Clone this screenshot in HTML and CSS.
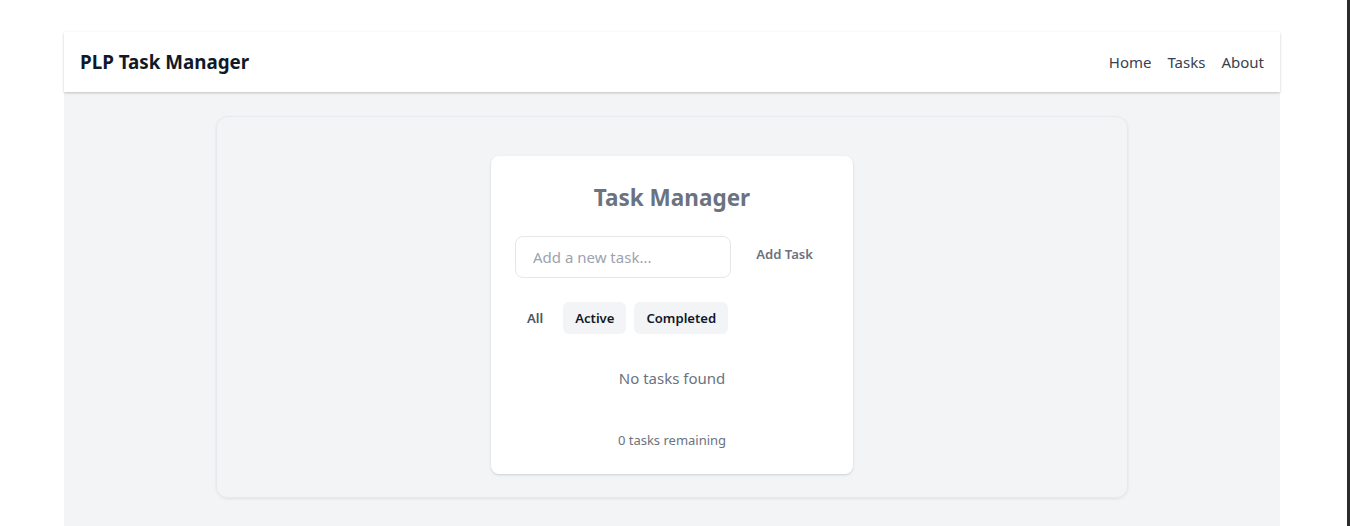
FILE: index.html
```html
<!DOCTYPE html>
<html lang="en">
<head>
<meta charset="utf-8">
<title>PLP Task Manager</title>
<link rel="stylesheet" href="styles.css">
</head>
<body>
<div class="app">
  <header class="navbar">
    <h1 class="brand">PLP Task Manager</h1>
    <nav class="nav">
      <a href="#">Home</a>
      <a href="#">Tasks</a>
      <a href="#">About</a>
    </nav>
  </header>
  <main class="main">
    <section class="panel">
      <div class="card">
        <h2 class="title">Task Manager</h2>
        <form class="add-row">
          <input class="task-input" type="text" placeholder="Add a new task...">
          <button class="add-btn" type="button">Add Task</button>
        </form>
        <div class="filters">
          <button class="filter filter-plain" type="button">All</button>
          <button class="filter filter-pill" type="button">Active</button>
          <button class="filter filter-pill" type="button">Completed</button>
        </div>
        <p class="empty">No tasks found</p>
        <p class="remaining">0 tasks remaining</p>
      </div>
    </section>
  </main>
</div>
<div class="edge"></div>
</body>
</html>
```

FILE: styles.css
```css
* { box-sizing: border-box; }
html, body { margin: 0; padding: 0; }
body {
  background: #ffffff;
  font-family: "Noto Sans", "Open Sans", sans-serif;
  height: 526px;
  overflow: hidden;
}
.app {
  margin: 32px 0 0 64px;
  width: 1216px;
  background: #f3f4f6;
  min-height: 494px;
}
.navbar {
  height: 60px;
  background: #ffffff;
  display: flex;
  align-items: center;
  justify-content: space-between;
  padding: 0 16px;
  box-shadow: 0 1px 3px rgba(0,0,0,0.12), 0 1px 2px rgba(0,0,0,0.1);
  position: relative;
}
.brand {
  margin: 0;
  font-size: 18.8px;
  line-height: 28px;
  font-weight: 700;
  color: #111827;
}
.nav { display: flex; gap: 16px; }
.nav a {
  color: #374151;
  text-decoration: none;
  font-size: 15px;
  line-height: 24px;
}
.main {
  padding: 24px 152px 0 152px;
}
.panel {
  border: 1px solid #e8e9ec;
  border-radius: 12px;
  box-shadow: 0 1px 3px rgba(0,0,0,0.08);
  padding: 39px 0 23px;
  display: flex;
  justify-content: center;
}
.card {
  width: 362px;
  background: #ffffff;
  border-radius: 8px;
  box-shadow: 0 1px 3px rgba(0,0,0,0.1), 0 1px 2px rgba(0,0,0,0.06);
  padding: 24px;
  display: flex;
  flex-direction: column;
}
.title {
  margin: 0 0 22px;
  padding-top: 2px;
  text-align: center;
  font-size: 22.5px;
  line-height: 32px;
  font-weight: 700;
  color: #6b7280;
}
.add-row {
  display: flex;
  gap: 9px;
  margin: 0 0 24px;
}
.task-input {
  flex: 1;
  min-width: 0;
  height: 42px;
  border: 1px solid #e5e7eb;
  border-radius: 8px;
  padding: 0 17px;
  font-family: inherit;
  font-size: 15px;
  color: #111827;
  outline: none;
}
.task-input::placeholder { color: #9ca3af; }
.add-btn {
  border: 0;
  background: transparent;
  padding: 0 16px 6px;
  font-family: inherit;
  font-size: 13.1px;
  font-weight: 600;
  color: #6b7280;
}
.filters {
  display: flex;
  gap: 8px;
}
.filter {
  height: 32px;
  border: 0;
  border-radius: 6px;
  padding: 0 12px;
  font-family: inherit;
  font-size: 13.1px;
  font-weight: 600;
}
.filter-plain { background: transparent; color: #4b5563; }
.filter-pill { background: #f3f4f6; color: #111827; }
.empty {
  margin: 24px 0 0;
  padding: 8px 0;
  text-align: center;
  font-size: 15px;
  line-height: 24px;
  color: #6b7280;
}
.remaining {
  margin: 32px 0 0;
  text-align: center;
  font-size: 13px;
  line-height: 20px;
  color: #6b7280;
}
.edge {
  position: fixed;
  top: 0;
  right: 0;
  width: 3px;
  height: 100%;
  background: #2b2b2b;
}
```
